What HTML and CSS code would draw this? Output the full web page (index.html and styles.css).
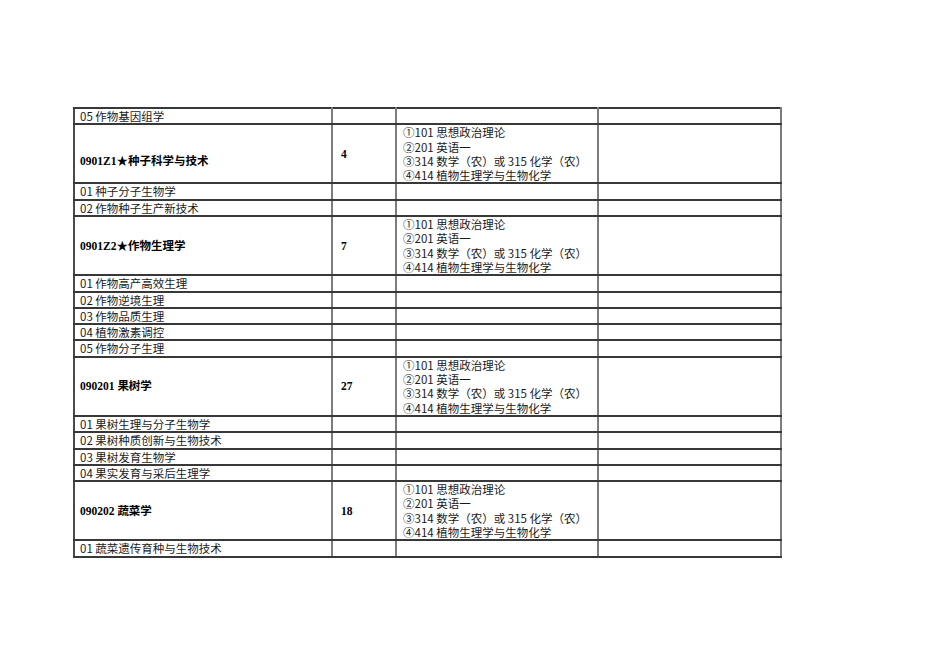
FILE: index.html
```html
<!DOCTYPE html>
<html lang="zh">
<head>
<meta charset="utf-8">
<title>招生目录</title>
<link rel="stylesheet" href="styles.css">
</head>
<body>
<table class="catalog">
  <colgroup>
    <col class="c1"><col class="c2"><col class="c3"><col class="c4">
  </colgroup>
  <tbody>
    <tr><td>05 作物基因组学</td><td></td><td></td><td></td></tr>
    <tr class="major">
      <td class="name low">0901Z1★种子科学与技术</td>
      <td class="num">4</td>
      <td class="exam">①101 思想政治理论<br>②201 英语一<br>③314 数学（农）或 315 化学（农）<br>④414 植物生理学与生物化学</td>
      <td></td>
    </tr>
    <tr><td>01 种子分子生物学</td><td></td><td></td><td></td></tr>
    <tr><td>02 作物种子生产新技术</td><td></td><td></td><td></td></tr>
    <tr class="major">
      <td class="name">0901Z2★作物生理学</td>
      <td class="num">7</td>
      <td class="exam">①101 思想政治理论<br>②201 英语一<br>③314 数学（农）或 315 化学（农）<br>④414 植物生理学与生物化学</td>
      <td></td>
    </tr>
    <tr><td>01 作物高产高效生理</td><td></td><td></td><td></td></tr>
    <tr><td>02 作物逆境生理</td><td></td><td></td><td></td></tr>
    <tr><td>03 作物品质生理</td><td></td><td></td><td></td></tr>
    <tr><td>04 植物激素调控</td><td></td><td></td><td></td></tr>
    <tr><td>05 作物分子生理</td><td></td><td></td><td></td></tr>
    <tr class="major">
      <td class="name">090201 果树学</td>
      <td class="num">27</td>
      <td class="exam">①101 思想政治理论<br>②201 英语一<br>③314 数学（农）或 315 化学（农）<br>④414 植物生理学与生物化学</td>
      <td></td>
    </tr>
    <tr><td>01 果树生理与分子生物学</td><td></td><td></td><td></td></tr>
    <tr><td>02 果树种质创新与生物技术</td><td></td><td></td><td></td></tr>
    <tr><td>03 果树发育生物学</td><td></td><td></td><td></td></tr>
    <tr><td>04 果实发育与采后生理学</td><td></td><td></td><td></td></tr>
    <tr class="major">
      <td class="name">090202 蔬菜学</td>
      <td class="num">18</td>
      <td class="exam">①101 思想政治理论<br>②201 英语一<br>③314 数学（农）或 315 化学（农）<br>④414 植物生理学与生物化学</td>
      <td></td>
    </tr>
    <tr><td>01 蔬菜遗传育种与生物技术</td><td></td><td></td><td></td></tr>
  </tbody>
</table>
</body>
</html>
```

FILE: styles.css
```css
html, body {
  margin: 0;
  padding: 0;
  background: #ffffff;
}

body {
  padding: 107px 0 0 73px;
  font-family: "Noto Sans CJK SC", sans-serif;
  font-size: 11.5px;
  color: #1a1a1a;
}

.catalog {
  border-collapse: collapse;
  table-layout: fixed;
  width: 709px;
}

.c1 { width: 258px; }
.c2 { width: 64px; }
.c3 { width: 202px; }
.c4 { width: 183px; }

.catalog td {
  border-top: 2px solid #383838;
  border-bottom: 2px solid #383838;
  border-left: 2px solid #7c7c7c;
  border-right: 2px solid #7c7c7c;
  padding: 0 5px;
  height: 14px;
  line-height: 14.3px;
  vertical-align: top;
  white-space: nowrap;
  overflow: hidden;
}

.catalog td:first-child {
  border-left-color: #4a4a4a;
}

.major td {
  height: 57px;
}

.catalog .name,
.catalog .num {
  vertical-align: middle;
  font-family: "Liberation Serif", "Noto Sans CJK SC", serif;
  font-weight: bold;
  font-size: 11.5px;
  color: #000;
}

.catalog .num {
  padding-left: 8px;
}

.major .name.low {
  padding-top: 15px;
  height: 42px;
}

.catalog .exam {
  padding-left: 6px;
}
```
